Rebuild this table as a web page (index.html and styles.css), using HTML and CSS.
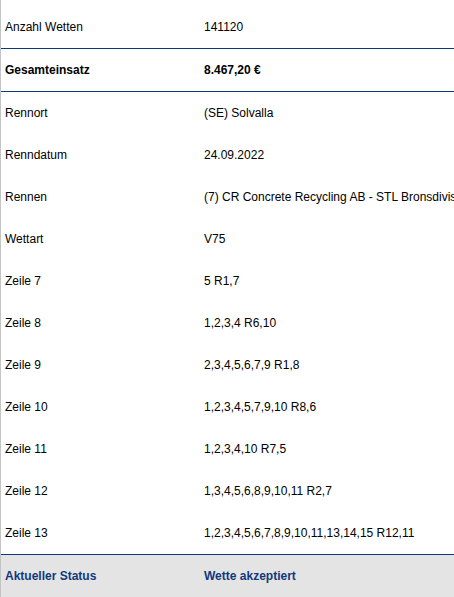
FILE: index.html
```html
<!DOCTYPE html>
<html lang="de">
<head>
<meta charset="utf-8">
<title>Wettdetails</title>
<link rel="stylesheet" href="styles.css">
</head>
<body>
<div class="details">
  <div class="row"><div class="label">Anzahl Wetten</div><div class="value">141120</div></div>
  <div class="row total"><div class="label">Gesamteinsatz</div><div class="value">8.467,20 €</div></div>
  <div class="row"><div class="label">Rennort</div><div class="value">(SE) Solvalla</div></div>
  <div class="row"><div class="label">Renndatum</div><div class="value">24.09.2022</div></div>
  <div class="row"><div class="label">Rennen</div><div class="value">(7) CR Concrete Recycling AB - STL Bronsdivision</div></div>
  <div class="row"><div class="label">Wettart</div><div class="value">V75</div></div>
  <div class="row"><div class="label">Zeile 7</div><div class="value">5 R1,7</div></div>
  <div class="row"><div class="label">Zeile 8</div><div class="value">1,2,3,4 R6,10</div></div>
  <div class="row"><div class="label">Zeile 9</div><div class="value">2,3,4,5,6,7,9 R1,8</div></div>
  <div class="row"><div class="label">Zeile 10</div><div class="value">1,2,3,4,5,7,9,10 R8,6</div></div>
  <div class="row"><div class="label">Zeile 11</div><div class="value">1,2,3,4,10 R7,5</div></div>
  <div class="row"><div class="label">Zeile 12</div><div class="value">1,3,4,5,6,8,9,10,11 R2,7</div></div>
  <div class="row"><div class="label">Zeile 13</div><div class="value">1,2,3,4,5,6,7,8,9,10,11,13,14,15 R12,11</div></div>
  <div class="row status"><div class="label">Aktueller Status</div><div class="value">Wette akzeptiert</div></div>
</div>
</body>
</html>
```
FILE: styles.css
```css
html, body {
  margin: 0;
  padding: 0;
  background: #ffffff;
  overflow: hidden;
}
body {
  font-family: "Liberation Sans", Arial, sans-serif;
  font-size: 12px;
  color: #000000;
}
.details {
  border-left: 1px solid #c4c4c4;
  padding-top: 6px;
  min-height: 591px;
}
.row {
  display: grid;
  grid-template-columns: 203px 1fr;
  align-items: center;
  height: 42px;
  white-space: nowrap;
}
.label {
  padding-left: 4px;
}
.value {
  overflow: visible;
}
.total {
  font-weight: bold;
  border-top: 1px solid #0b3a7c;
  border-bottom: 1px solid #0b3a7c;
}
.status {
  border-top: 1px solid #0b3a7c;
  background: #e4e4e4;
  color: #10397d;
  font-weight: bold;
}
```
